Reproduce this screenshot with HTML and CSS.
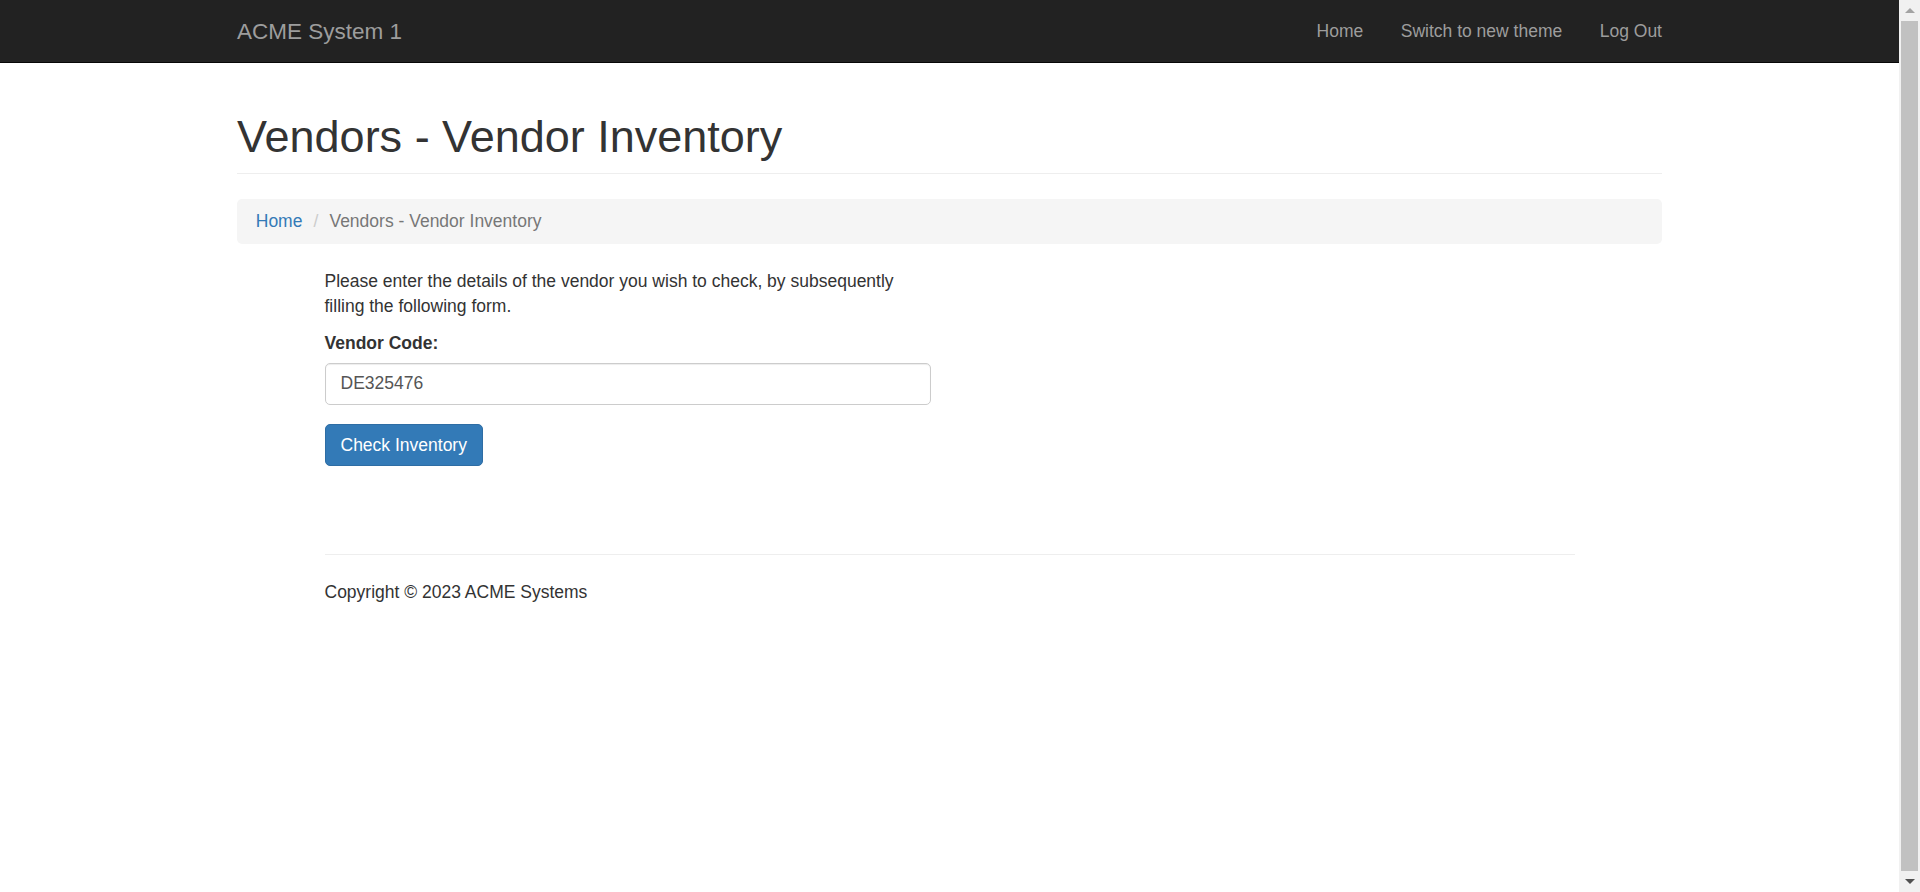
FILE: index.html
```html
<!DOCTYPE html>
<html lang="en">
<head>
<meta charset="utf-8">
<title>Vendors - Vendor Inventory</title>
<link rel="stylesheet" href="styles.css">
</head>
<body>
<div class="page">
  <nav class="navbar">
    <div class="container nav-inner">
      <a class="brand" href="#">ACME System 1</a>
      <ul class="nav">
        <li><a href="#">Home</a></li>
        <li><a href="#">Switch to new theme</a></li>
        <li><a href="#">Log Out</a></li>
      </ul>
    </div>
  </nav>
  <div class="container">
    <div class="page-header">
      <h1>Vendors - Vendor Inventory</h1>
    </div>
    <ol class="breadcrumb">
      <li><a href="#">Home</a></li>
      <li class="active">Vendors - Vendor Inventory</li>
    </ol>
    <div class="body-content">
      <form class="form-col">
        <p>Please enter the details of the vendor you wish to check, by subsequently filling the following form.</p>
        <div class="form-group">
          <label for="code">Vendor Code:</label>
          <input id="code" class="form-control" type="text" value="DE325476">
        </div>
        <button type="button" class="btn">Check Inventory</button>
      </form>
      <hr>
      <footer>
        <p>Copyright © 2023 ACME Systems</p>
      </footer>
    </div>
  </div>
</div>
<div class="scrollbar">
  <div class="sb-btn"><span class="arrow-up"></span></div>
  <div class="sb-track"><div class="sb-thumb"></div></div>
  <div class="sb-btn"><span class="arrow-down"></span></div>
</div>
</body>
</html>
```
FILE: styles.css
```css
* { box-sizing: border-box; }
html, body { margin: 0; padding: 0; height: 100%; }
body {
  display: flex;
  overflow: hidden;
  font-family: "Liberation Sans", Arial, Helvetica, sans-serif;
  font-size: 17.5px;
  line-height: 25px;
  color: #333;
  background: #fff;
}
a { text-decoration: none; }
.page { flex: 1; min-width: 0; }

.container {
  width: 1462.5px;
  margin: 0 auto;
  padding: 0 18.75px;
}

.navbar {
  height: 63px;
  background: #222;
  border-bottom: 1px solid #080808;
}
.nav-inner {
  display: flex;
  justify-content: space-between;
  align-items: flex-start;
  padding: 0;
}
.brand {
  display: block;
  padding: 18.75px;
  font-size: 22.5px;
  line-height: 25px;
  color: #9d9d9d;
}
.nav {
  display: flex;
  list-style: none;
  margin: 0;
  padding: 0;
}
.nav a {
  display: block;
  padding: 18.75px;
  line-height: 25px;
  color: #9d9d9d;
}

.page-header {
  margin: 49px 0 25px;
  padding-bottom: 11.25px;
  border-bottom: 1px solid #eee;
}
.page-header h1 {
  margin: 0;
  font-size: 45px;
  line-height: 49.5px;
  font-weight: 500;
  color: #333;
}

.breadcrumb {
  display: flex;
  list-style: none;
  margin: 0 0 25px;
  padding: 10px 18.75px;
  background: #f5f5f5;
  border-radius: 5px;
}
.breadcrumb a { color: #337ab7; }
.breadcrumb li + li::before {
  content: "/\00a0";
  padding: 0 6.25px 0 11px;
  color: #ccc;
}
.breadcrumb .active { color: #777; }

.body-content {
  width: 1250px;
  margin: 0 auto;
}
.form-col {
  width: 606px;
  margin-bottom: 88px;
}
.form-col p { margin: 0 0 12.5px; }
.form-group { margin-bottom: 18.75px; }
.form-group label {
  display: block;
  font-weight: bold;
  margin-bottom: 6.25px;
}
.form-control {
  display: block;
  width: 100%;
  height: 42.5px;
  padding: 7.5px 15px;
  font-family: inherit;
  font-size: 17.5px;
  line-height: 25px;
  color: #555;
  background: #fff;
  border: 1px solid #ccc;
  border-radius: 5px;
  box-shadow: inset 0 1px 1px rgba(0,0,0,.075);
}
.btn {
  display: inline-block;
  height: 42.5px;
  padding: 7.5px 15px;
  font-family: inherit;
  font-size: 17.5px;
  line-height: 25px;
  color: #fff;
  background: #337ab7;
  border: 1px solid #2e6da4;
  border-radius: 5px;
  cursor: pointer;
}

hr {
  margin: 25px 0;
  border: 0;
  border-top: 1px solid #eee;
  height: 0;
}
footer p { margin: 0; }

.scrollbar {
  width: 21px;
  flex: none;
  display: flex;
  flex-direction: column;
  background: #f1f1f1;
}
.sb-btn {
  height: 21px;
  display: flex;
  align-items: center;
  justify-content: center;
}
.arrow-up {
  width: 0; height: 0;
  border-left: 5px solid transparent;
  border-right: 5px solid transparent;
  border-bottom: 5px solid #a3a3a3;
}
.arrow-down {
  width: 0; height: 0;
  border-left: 5px solid transparent;
  border-right: 5px solid transparent;
  border-top: 5px solid #505050;
}
.sb-track { flex: 1; padding: 0 2px; }
.sb-thumb { height: 100%; background: #c1c1c1; }
```
